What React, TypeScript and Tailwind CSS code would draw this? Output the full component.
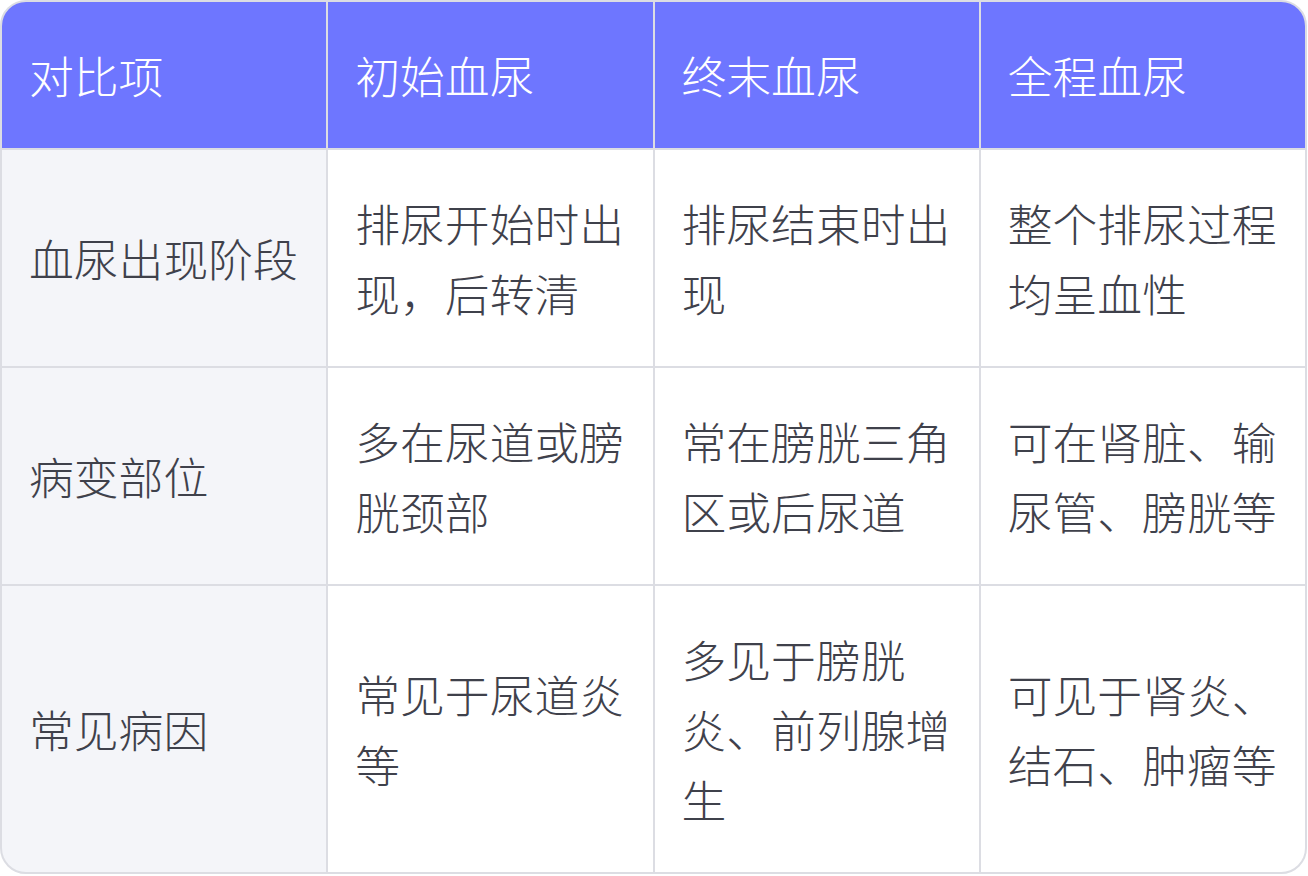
const header = ["对比项", "初始血尿", "终末血尿", "全程血尿"];

const rows = [
  ["血尿出现阶段", "排尿开始时出现，后转清", "排尿结束时出现", "整个排尿过程均呈血性"],
  ["病变部位", "多在尿道或膀胱颈部", "常在膀胱三角区或后尿道", "可在肾脏、输尿管、膀胱等"],
  ["常见病因", "常见于尿道炎等", "多见于膀胱炎、前列腺增生", "可见于肾炎、结石、肿瘤等"],
];

export default function App() {
  return (
    <div className="w-[1308px] h-[876px] bg-white">
      <div
        className="w-[1307px] grid grid-cols-4 gap-[2px] bg-[#dcdde3] border-2 border-[#dcdde3] rounded-[26px] overflow-hidden text-[44.8px] leading-[70px] font-light"
        style={{ fontFamily: '"Noto Sans CJK SC", "Noto Sans", sans-serif' }}
      >
        {header.map((h) => (
          <div key={h} className="bg-[#6e76ff] text-white pl-[27px] pr-[24px] py-[38px] flex items-center">
            {h}
          </div>
        ))}
        {rows.map((r) =>
          r.map((c, i) => (
            <div
              key={r[0] + i}
              className={`pl-[27px] pr-[24px] py-[38px] flex items-center text-[#3f414b] ${
                i === 0 ? "bg-[#f4f5f9]" : "bg-white"
              }`}
            >
              {c}
            </div>
          ))
        )}
      </div>
    </div>
  );
}
